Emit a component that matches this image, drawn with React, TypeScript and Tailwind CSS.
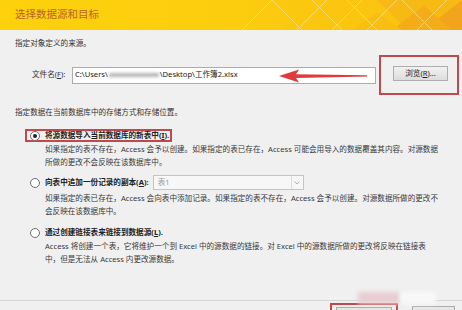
import React from 'react';

const font = { fontFamily: '"Noto Sans", "Noto Sans CJK SC", sans-serif' };

function Radio({ checked = false }: { checked?: boolean }) {
  return (
    <span className="flex h-[10px] w-[10px] shrink-0 items-center justify-center rounded-full border border-[#6f6f6f] bg-white">
      {checked && <span className="h-[4px] w-[4px] rounded-full bg-[#222]" />}
    </span>
  );
}

function Desc({ lines }: { lines: string[] }) {
  return (
    <div className="pl-[30px] text-[7.6px] leading-[13px] text-[#3a3a3a]">
      {lines.map((l) => (
        <div key={l} className="whitespace-nowrap">
          {l}
        </div>
      ))}
    </div>
  );
}

function HeaderArt() {
  return (
    <svg className="absolute right-0 top-0" width="260" height="30" viewBox="0 0 260 30">
      <polygon points="110,0 260,0 260,30 80,30" fill="#fbc70f" opacity="0.6" />
      <polygon points="175,0 260,0 260,30 205,30" fill="#f7b914" />
      <polygon points="222,30 260,0 260,30" fill="#f2a51c" />
      <polygon points="190,30 222,6 250,30" fill="#f4ad18" />
      <polygon points="150,30 175,12 200,30" fill="#f8bf12" />
      <g stroke="#fde58a" strokeWidth="0.8" fill="none" opacity="0.85">
        <line x1="40" y1="30" x2="70" y2="0" />
        <line x1="70" y1="0" x2="100" y2="30" />
        <line x1="95" y1="30" x2="125" y2="0" />
        <line x1="110" y1="0" x2="140" y2="30" />
        <line x1="130" y1="30" x2="160" y2="0" />
        <line x1="145" y1="0" x2="175" y2="30" />
        <line x1="165" y1="30" x2="195" y2="0" />
        <line x1="200" y1="0" x2="230" y2="30" />
        <line x1="215" y1="30" x2="245" y2="0" />
      </g>
    </svg>
  );
}

export default function App() {
  return (
    <div className="flex h-[310px] w-[462px] flex-col overflow-hidden bg-[#f0f0f0]" style={font}>
      <div className="relative flex h-[30px] shrink-0 items-center bg-gradient-to-r from-[#fdd10c] via-[#fccd0e] to-[#f8bb14] pl-[15px]">
        <HeaderArt />
        <span className="relative text-[10.5px] text-[#b8642a]">选择数据源和目标</span>
      </div>

      <div className="flex flex-1 flex-col pl-[15px] pt-[7px]">
        <div className="text-[7.6px] leading-[13px] text-[#333]">指定对象定义的来源。</div>

        <div className="mt-[5px] flex items-center">
          <span className="ml-[17px] w-[40px] whitespace-nowrap text-[7.6px] text-[#333]">
            文件名(<span className="underline">F</span>):
          </span>
          <div className="relative flex h-[17px] w-[304px] items-center border border-[#acacac] bg-white pl-[2px] text-[7.6px] text-[#222]">
            <span className="whitespace-nowrap">C:\Users\</span>
            <span className="mx-[1px] inline-block h-[4px] w-[50px] bg-[#b8b8b8] blur-[1.5px]" />
            <span className="whitespace-nowrap">\Desktop\工作簿2.xlsx</span>
            <svg className="absolute left-[206px] top-[1px]" width="88" height="14" viewBox="0 0 88 14">
              <path d="M0 7 L20 0.5 L17 5.2 L88 6.2 L88 7.6 L17 9 L20 13.5 Z" fill="#e2393b" />
            </svg>
          </div>
          <div className="ml-[3px] flex h-[40px] w-[80px] items-start border-2 border-[#c2484c] pl-[12px] pt-[9px]">
            <div className="flex h-[15px] w-[55px] items-center justify-center border border-[#adadad] bg-gradient-to-b from-[#f2f2f2] to-[#dcdcdc] text-[7.6px] text-[#222]">
              浏览(<span className="underline">R</span>)...
            </div>
          </div>
        </div>

        <div className="mt-[11px] text-[7.6px] leading-[13px] text-[#333]">指定数据在当前数据库中的存储方式和存储位置。</div>

        <div className="ml-[10px] mt-[10px] flex h-[13px] w-fit items-center gap-[5px] border-2 border-[#c2484c] pl-[3px] pr-[1px]">
          <Radio checked />
          <span className="whitespace-nowrap text-[7.6px] font-bold text-[#222]">
            将源数据导入当前数据库的新表中(<span className="underline">I</span>).
          </span>
        </div>
        <div className="mt-[1px]">
          <Desc
            lines={[
              '如果指定的表不存在，Access 会予以创建。如果指定的表已存在，Access 可能会用导入的数据覆盖其内容。对源数据',
              '所做的更改不会反映在该数据库中。',
            ]}
          />
        </div>

        <div className="mt-[6px] flex items-center pl-[15px]">
          <Radio />
          <span className="ml-[5px] mr-[4px] whitespace-nowrap text-[7.6px] font-bold text-[#222]">
            向表中追加一份记录的副本(<span className="underline">A</span>):
          </span>
          <div className="flex h-[15px] w-[151px] items-center justify-between border border-[#c4c4c4] bg-[#f7f7f7] pl-[4px] text-[7.6px] text-[#9a9a9a]">
            <span>表1</span>
            <span className="flex h-full w-[12px] items-center justify-center border-l border-[#dcdcdc]">
              <svg width="6" height="4" viewBox="0 0 6 4">
                <path d="M0.5 0.5 L3 3 L5.5 0.5" stroke="#9a9a9a" strokeWidth="0.8" fill="none" />
              </svg>
            </span>
          </div>
        </div>
        <div className="mt-[2px]">
          <Desc
            lines={[
              '如果指定的表已存在，Access 会向表中添加记录。如果指定的表不存在，Access 会予以创建。对源数据所做的更改不',
              '会反映在该数据库中。',
            ]}
          />
        </div>

        <div className="mt-[8px] flex h-[13px] items-center pl-[15px]">
          <Radio />
          <span className="ml-[5px] whitespace-nowrap text-[7.6px] font-bold text-[#222]">
            通过创建链接表来链接到数据源(<span className="underline">L</span>).
          </span>
        </div>
        <div className="mt-[1px]">
          <Desc
            lines={[
              'Access 将创建一个表，它将维护一个到 Excel 中的源数据的链接。对 Excel 中的源数据所做的更改将反映在链接表',
              '中，但是无法从 Access 内更改源数据。',
            ]}
          />
        </div>
      </div>

      <div className="relative flex h-[10px] shrink-0 items-start border-t border-[#d6d6d6]">
        <div className="pointer-events-none absolute left-[358px] top-[-9px] h-[12px] w-[42px] bg-[#e9cdd1] blur-[2px]" />
        <div className="pointer-events-none absolute left-[400px] top-[-9px] h-[12px] w-[36px] bg-[#f8f8f8] blur-[2px]" />
        <div className="ml-[330px] mt-[2px] flex h-[20px] w-[68px] border-2 border-[#c2484c] pl-[4px] pt-[2px]">
          <div className="h-[16px] w-[56px] border border-[#adadad] bg-[#e6e6e6]" />
        </div>
        <div className="ml-[14px] mt-[5px] h-[16px] w-[43px] border border-[#adadad] bg-[#e6e6e6]" />
      </div>
    </div>
  );
}
